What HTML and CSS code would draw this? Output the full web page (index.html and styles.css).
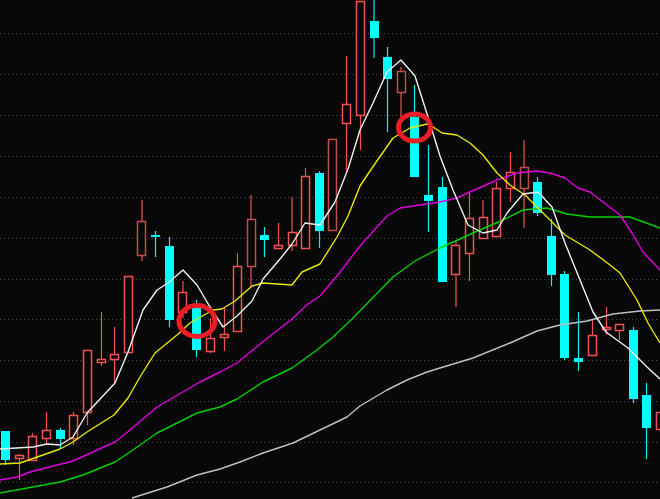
FILE: index.html
```html
<!DOCTYPE html>
<html lang="en">
<head>
<meta charset="utf-8">
<title>K-line chart</title>
<link rel="stylesheet" href="styles.css">
</head>
<body>
<svg class="chart" viewBox="0 0 660 499" width="660" height="499" role="img" aria-label="Candlestick chart with moving averages">
  <path class="grid" d="M0 33.5H660M0 74.5H660M0 115.5H660M0 156.5H660M0 197.5H660M0 238.5H660M0 279.5H660M0 319.5H660M0 360.5H660M0 401.5H660M0 442.5H660M0 482.5H660"/>

  <path class="wick-red" d="M19.5 454V480M32.5 433V437M46.5 412V445M73.5 412V445M87.5 412V425M101.5 312V366M114.5 327V383M183 281V318M210.5 318V353M224.5 308V351M237.5 253V267M278.5 223V246M292 197V251M305.5 168V177M346.5 56V171M360.5 115V150M456 240V307M469.5 193V281M496.5 182V189M510.5 152V202M592.5 319V336M606.5 307V335M619.5 324V340"/>
  <path class="wick-red dim" d="M142 200V261M251 195V287M401 67V117M483 200V218M524 140V228"/>
  <path class="wick-cyan" d="M5.5 431V465M60.5 428V449M155.5 231V257M169.5 237V327M196.5 300V357M264.5 227V257M319.5 171V248M387.5 47V132M414.5 85V177M428.5 145V232M442.5 177V282M537.5 177V216M551.5 219V286M564.5 271V360M578.5 312V371M633.5 327V403M646.5 383V459"/>
  <path class="wick-cyan dim" d="M374 0V58"/>

  <g class="body-red">
    <rect x="15.5" y="455.5" width="8" height="3"/>
    <rect x="28.5" y="436.5" width="8" height="24"/>
    <rect x="42.5" y="430.5" width="8" height="8"/>
    <rect x="69.5" y="415.5" width="8" height="23"/>
    <rect x="83.5" y="350.5" width="8" height="62"/>
    <rect x="97.5" y="359.5" width="8" height="3"/>
    <rect x="110.5" y="354.5" width="8" height="5"/>
    <rect x="124.5" y="276.5" width="8" height="76"/>
    <rect x="178.5" y="292.5" width="8" height="20"/>
    <rect x="206.5" y="338.5" width="8" height="13"/>
    <rect x="220.5" y="334.5" width="8" height="3"/>
    <rect x="233.5" y="266.5" width="8" height="65"/>
    <rect x="274.5" y="245.5" width="8" height="3"/>
    <rect x="288.5" y="232.5" width="8" height="13"/>
    <rect x="301.5" y="176.5" width="8" height="72"/>
    <rect x="342.5" y="104.5" width="8" height="19"/>
    <rect x="356.5" y="1.5" width="8" height="114"/>
    <rect x="451.5" y="245.5" width="8" height="29"/>
    <rect x="465.5" y="218.5" width="8" height="35"/>
    <rect x="479.5" y="217.5" width="8" height="21"/>
    <rect x="492.5" y="188.5" width="8" height="48"/>
    <rect x="506.5" y="172.5" width="8" height="16"/>
    <rect x="588.5" y="335.5" width="8" height="20"/>
    <rect x="602.5" y="327.5" width="8" height="2"/>
    <rect x="615.5" y="324.5" width="8" height="6"/>
    <rect x="656.5" y="412.5" width="8" height="17"/>
  </g>
  <g class="body-red dim">
    <rect x="137.5" y="221.5" width="8" height="34"/>
    <rect x="247.5" y="219.5" width="8" height="47"/>
    <rect x="328.5" y="139.5" width="8" height="91"/>
    <rect x="397.5" y="71.5" width="8" height="21"/>
    <rect x="520.5" y="167.5" width="8" height="21"/>
  </g>
  <g class="body-cyan">
    <rect x="1" y="431" width="9" height="29"/>
    <rect x="56" y="430" width="9" height="9"/>
    <rect x="151" y="235" width="9" height="2"/>
    <rect x="165" y="246" width="9" height="74"/>
    <rect x="192" y="307" width="9" height="43"/>
    <rect x="260" y="235" width="9" height="5"/>
    <rect x="315" y="173" width="9" height="58"/>
    <rect x="370" y="21" width="9" height="17"/>
    <rect x="383" y="57" width="9" height="22"/>
    <rect x="410" y="117" width="9" height="60"/>
    <rect x="424" y="195" width="9" height="6"/>
    <rect x="438" y="187" width="9" height="95"/>
    <rect x="533" y="182" width="9" height="31"/>
    <rect x="547" y="236" width="9" height="39"/>
    <rect x="560" y="274" width="9" height="84"/>
    <rect x="574" y="358" width="9" height="4"/>
    <rect x="629" y="330" width="9" height="69"/>
    <rect x="642" y="395" width="9" height="33"/>
  </g>

  <polyline class="ma ma-gray" points="132,498 167,487 197,475 220,469 240,462 263,453 293,443 320,430 347,417 360,406 387,390 407,380 427,372 440,368 473,358 510,343 537,331 560,325 587,321 613,314 640,311 660,310"/>
  <polyline class="ma ma-green" points="0,493 60,482 83,475 115,462 130,452 157,433 197,413 220,407 237,399 263,382 292,368 317,350 333,337 352,319 393,277 415,261 440,248 473,233 503,220 523,210 547,208 567,214 590,217 630,217 660,228"/>
  <polyline class="ma ma-magenta" points="0,480 17,477 30,472 73,461 115,442 130,430 157,407 200,382 220,372 237,363 265,340 292,319 308,304 320,296 337,276 360,246 387,216 400,208 440,202 457,198 470,192 497,180 517,173 537,171 550,173 565,178 578,188 590,192 603,202 620,215 632,233 643,252 660,270"/>
  <polyline class="ma ma-yellow" points="0,464 20,463 43,455 60,449 73,442 87,432 114,415 128,398 140,377 155,353 177,335 190,323 213,310 222,309 235,301 252,286 263,283 292,285 302,272 320,264 337,237 348,216 360,186 372,168 393,138 410,128 427,124 433,127 442,133 457,135 470,143 483,155 497,173 510,185 525,195 540,210 553,223 565,235 590,250 610,265 620,273 637,300 648,323 660,343"/>
  <polyline class="ma ma-white" points="0,449 33,447 47,444 60,445 73,437 87,413 115,383 128,352 143,310 157,290 168,283 183,270 197,285 210,307 223,327 237,316 252,301 263,279 280,259 292,244 305,223 320,225 335,202 348,169 360,130 373,103 387,72 401,60 415,76 428,117 440,156 453,190 468,225 483,233 497,230 507,213 523,194 538,192 552,207 565,243 580,280 593,312 606,332 628,348 647,367 660,379"/>

  <ellipse class="ring" cx="197" cy="321" rx="18" ry="15.5"/>
  <ellipse class="ring" cx="414.5" cy="127.5" rx="16" ry="13.5"/>
</svg>
</body>
</html>
```

FILE: styles.css
```css
html, body {
  margin: 0;
  padding: 0;
  background: #080808;
  overflow: hidden;
}

.chart {
  display: block;
  background: #080808;
}

.grid {
  fill: none;
  stroke: #4a4a4a;
  stroke-width: 1;
  stroke-dasharray: 1 3;
}

.wick-red,
.wick-cyan {
  fill: none;
  stroke-width: 1.2;
}

.wick-red { stroke: #ee5252; }
.wick-cyan { stroke: #00f4f4; }

.body-red rect {
  fill: #080808;
  stroke: #ee5252;
  stroke-width: 1.5;
}

.body-red.dim rect { stroke: #c04e4c; }

.body-cyan rect {
  fill: #00ffff;
}

.ma {
  fill: none;
  stroke-width: 1.4;
  stroke-linejoin: round;
}

.ma-gray { stroke: #c0c0c0; }
.ma-green { stroke: #00d000; }
.ma-magenta { stroke: #e000e0; }
.ma-yellow { stroke: #e8e800; }
.ma-white { stroke: #f0f0f0; }

.ring {
  fill: none;
  stroke: #ee1c25;
  stroke-width: 5;
}
```
